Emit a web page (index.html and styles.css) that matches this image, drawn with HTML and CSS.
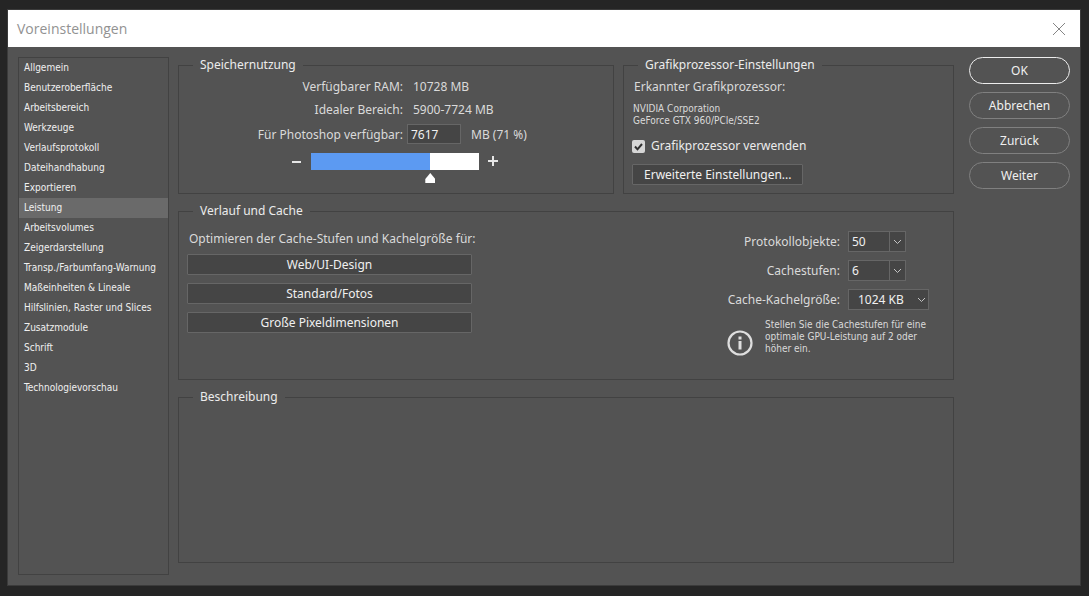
FILE: index.html
```html
<!DOCTYPE html>
<html lang="de">
<head>
<meta charset="utf-8">
<title>Voreinstellungen</title>
<link rel="stylesheet" href="styles.css">
</head>
<body>
<main class="dialog">
  <header class="titlebar">
    <h1 class="title">Voreinstellungen</h1>
    <button class="close" type="button" aria-label="Schließen">
      <svg width="14" height="14" viewBox="0 0 14 14"><path d="M1 1l12 12M13 1L1 13" fill="none" stroke="#858585" stroke-width="1"/></svg>
    </button>
  </header>
  <div class="body">
    <nav class="sidebar" aria-label="Kategorien">
      <a href="#">Allgemein</a>
      <a href="#">Benutzeroberfläche</a>
      <a href="#">Arbeitsbereich</a>
      <a href="#">Werkzeuge</a>
      <a href="#">Verlaufsprotokoll</a>
      <a href="#">Dateihandhabung</a>
      <a href="#">Exportieren</a>
      <a href="#" class="active" aria-current="page">Leistung</a>
      <a href="#">Arbeitsvolumes</a>
      <a href="#">Zeigerdarstellung</a>
      <a href="#">Transp./Farbumfang-Warnung</a>
      <a href="#">Maßeinheiten &amp; Lineale</a>
      <a href="#">Hilfslinien, Raster und Slices</a>
      <a href="#">Zusatzmodule</a>
      <a href="#">Schrift</a>
      <a href="#">3D</a>
      <a href="#">Technologievorschau</a>
    </nav>

    <div class="panels">
      <div class="top-row">
        <fieldset class="group memory">
          <legend>Speichernutzung</legend>
          <div class="memory-grid">
            <span class="label">Verfügbarer RAM:</span><span class="value">10728 MB</span>
            <span class="label">Idealer Bereich:</span><span class="value">5900-7724 MB</span>
            <label class="label" for="ram">Für Photoshop verfügbar:</label>
            <span class="ram-entry"><input class="field ram-field" id="ram" type="text" value="7617"><span>MB (71 %)</span></span>
          </div>
          <div class="slider-row">
            <button class="step" type="button" aria-label="Weniger"><svg width="11" height="11" viewBox="0 0 11 11"><path d="M1 6h9" stroke="#e6e6e6" stroke-width="2"/></svg></button>
            <div class="slider">
              <div class="slider-bar"><div class="slider-fill" style="width: 71%"></div></div>
              <input class="slider-input" type="range" min="0" max="10728" value="7617" aria-label="Für Photoshop verfügbarer Speicher">
            </div>
            <button class="step" type="button" aria-label="Mehr"><svg width="11" height="11" viewBox="0 0 11 11"><path d="M0 5h10M5 0v10" stroke="#e6e6e6" stroke-width="2"/></svg></button>
          </div>
        </fieldset>

        <fieldset class="group gpu">
          <legend>Grafikprozessor-Einstellungen</legend>
          <p class="gpu-title">Erkannter Grafikprozessor:</p>
          <p class="small gpu-name">NVIDIA Corporation<br>GeForce GTX 960/PCIe/SSE2</p>
          <label class="check"><input type="checkbox" checked>Grafikprozessor verwenden</label>
          <button class="push advanced" type="button">Erweiterte Einstellungen...</button>
        </fieldset>
      </div>

      <fieldset class="group cache">
        <legend>Verlauf und Cache</legend>
        <div class="cache-row">
          <div class="presets">
            <p>Optimieren der Cache-Stufen und Kachelgröße für:</p>
            <button class="push" type="button">Web/UI-Design</button>
            <button class="push" type="button">Standard/Fotos</button>
            <button class="push" type="button">Große Pixeldimensionen</button>
          </div>
          <div class="cache-settings">
            <label class="label" for="history">Protokollobjekte:</label>
            <span class="combo">
              <input class="field" id="history" type="text" value="50">
              <button type="button" aria-label="Protokollobjekte auswählen"><svg width="9" height="6" viewBox="0 0 9 6"><path d="M1 1l3.500 3.500L8 1" fill="none" stroke="#c4c4c4"/></svg></button>
            </span>
            <label class="label" for="levels">Cachestufen:</label>
            <span class="combo">
              <input class="field" id="levels" type="text" value="6">
              <button type="button" aria-label="Cachestufen auswählen"><svg width="9" height="6" viewBox="0 0 9 6"><path d="M1 1l3.500 3.500L8 1" fill="none" stroke="#c4c4c4"/></svg></button>
            </span>
            <label class="label" for="tile">Cache-Kachelgröße:</label>
            <span class="dropdown">
              <select id="tile"><option>1024 KB</option></select>
              <svg width="9" height="6" viewBox="0 0 9 6"><path d="M1 1l3.500 3.500L8 1" fill="none" stroke="#c4c4c4"/></svg>
            </span>
            <div class="hint">
              <svg width="26" height="26" viewBox="0 0 26 26"><circle cx="13" cy="13" r="11.500" fill="none" stroke="#dedede" stroke-width="2.200"/><path d="M11.500 11h3v8.500h-3zM11.500 6.500h3v3h-3z" fill="#dedede"/></svg>
              <p class="small">Stellen Sie die Cachestufen für eine optimale GPU-Leistung auf 2 oder höher ein.</p>
            </div>
          </div>
        </div>
      </fieldset>

      <fieldset class="group description">
        <legend>Beschreibung</legend>
      </fieldset>
    </div>

    <div class="actions">
      <button class="pill primary" type="button">OK</button>
      <button class="pill" type="button">Abbrechen</button>
      <button class="pill" type="button">Zurück</button>
      <button class="pill" type="button">Weiter</button>
    </div>
  </div>
</main>
</body>
</html>
```
FILE: styles.css
```css
* { box-sizing: border-box; }

body {
  margin: 0;
  min-height: 100vh;
  padding: 10px 9px 11px 8px;
  display: flex;
  background: #252525;
  color: #dadada;
  font: 12px/14px "Noto Sans", "Open Sans", sans-serif;
}

p, h1 { margin: 0; }

button, input, select {
  margin: 0;
  font: inherit;
  color: #f0f0f0;
}

svg { display: block; }

.dialog {
  flex: 1;
  display: flex;
  flex-direction: column;
  background: #535353;
  outline: 1px solid #3b3b3b;
}

.titlebar {
  height: 37px;
  padding: 0 14px 0 9px;
  display: flex;
  align-items: center;
  justify-content: space-between;
  background: #fff;
}

.title {
  font: 400 14px/20px "Open Sans", sans-serif;
  color: #929292;
}

.close {
  padding: 0;
  border: 0;
  background: none;
}

.body {
  flex: 1;
  display: flex;
  padding: 10px;
}

.sidebar {
  width: 151px;
  margin-right: 9px;
  border: 1px solid #424242;
}

.sidebar a {
  display: block;
  padding-left: 5px;
  font-family: "DejaVu Sans Condensed", sans-serif;
  font-size: 10px;
  line-height: 20px;
  white-space: nowrap;
  color: #f0f0f0;
  text-decoration: none;
}

.sidebar .active { background: #6a6a6a; }

.panels {
  flex: 1;
  display: flex;
  flex-direction: column;
  gap: 9px;
  padding-bottom: 12px;
}

.top-row {
  display: grid;
  grid-template-columns: 436fr 331fr;
  gap: 9px;
}

.group {
  min-width: 0;
  margin: 0;
  padding: 0;
  border: 1px solid #424242;
}

.group legend {
  margin-left: 14px;
  padding: 0 7px;
  line-height: 16px;
  color: #ececec;
}

.memory { min-height: 137px; }

.gpu { padding: 0 8px; }

.gpu legend { margin-left: 6px; }

.memory-grid {
  display: grid;
  grid-template-columns: 224px 1fr;
  row-gap: 6px;
  align-items: center;
  padding-top: 5px;
  line-height: 17px;
}

.label { text-align: right; }

.value { padding-left: 10px; }

.field {
  min-width: 0;
  padding: 0 3px;
  border: 1px solid #666;
  background: #454545;
}

.ram-entry {
  display: flex;
  align-items: center;
  gap: 10px;
  padding-left: 4px;
}

.ram-field {
  width: 54px;
  height: 20px;
}

.slider-row {
  display: flex;
  align-items: flex-start;
  gap: 9px;
  padding: 9px 0 0 112px;
}

.step {
  height: 17px;
  padding: 0;
  border: 0;
  background: none;
}

.slider {
  width: 168px;
  display: grid;
}

.slider-bar, .slider-input { grid-area: 1 / 1; }

.slider-bar {
  height: 17px;
  background: #fff;
}

.slider-fill {
  height: 100%;
  background: #5c9af2;
}

.slider-input {
  height: 30px;
  width: 178px;
  margin: 0 -5px;
  appearance: none;
  background: none;
}

.slider-input::-webkit-slider-runnable-track { height: 30px; }

.slider-input::-webkit-slider-thumb {
  appearance: none;
  width: 10px;
  height: 10px;
  margin-top: 20px;
  background: #fff;
  clip-path: polygon(50% 0, 100% 60%, 100% 100%, 0 100%, 0 60%);
}

.gpu-title { padding: 7px 0 0 2px; }

.small {
  font-family: "DejaVu Sans Condensed", sans-serif;
  font-size: 10px;
  line-height: 12px;
}

.gpu-name { padding: 9px 0 0 1px; }

.check {
  display: flex;
  align-items: center;
  gap: 6px;
  margin-top: 12px;
  color: #ececec;
}

.check input {
  appearance: none;
  width: 13px;
  height: 13px;
  border-radius: 2px;
  background: #d6d6d6;
}

.check input:checked {
  background: #d6d6d6 url("data:image/svg+xml,%3Csvg xmlns='http://www.w3.org/2000/svg' viewBox='0 0 13 13'%3E%3Cpath d='M3 6.500l2.500 2.800L10 4' fill='none' stroke='%23303030' stroke-width='2'/%3E%3C/svg%3E");
}

.push {
  height: 21px;
  padding: 0 11px;
  border: 1px solid #666;
  border-radius: 1px;
  background: #454545;
}

.advanced { margin-top: 11px; }

.cache { min-height: 177px; }

.cache-row {
  display: flex;
  justify-content: space-between;
  padding: 12px 24px 0 8px;
}

.presets {
  width: 285px;
  display: flex;
  flex-direction: column;
  gap: 8px;
}

.presets p {
  padding: 1px 0 0 2px;
  white-space: nowrap;
}

.cache-settings {
  display: grid;
  grid-template-columns: 113px 81px;
  column-gap: 8px;
  row-gap: 8px;
  align-items: center;
}

.combo {
  display: flex;
  width: 58px;
  height: 21px;
}

.combo .field { width: 42px; }

.combo button {
  width: 17px;
  margin-left: -1px;
  padding: 0;
  display: grid;
  place-items: center;
  border: 1px solid #666;
  background: #454545;
}

.dropdown {
  display: grid;
  align-items: center;
}

.dropdown select, .dropdown svg { grid-area: 1 / 1; }

.dropdown select {
  appearance: none;
  width: 100%;
  height: 21px;
  padding: 0 9px;
  border: 1px solid #666;
  border-radius: 0;
  background: #454545;
}

.dropdown svg {
  justify-self: end;
  margin-right: 3px;
  pointer-events: none;
}

.hint {
  grid-column: 1 / -1;
  display: grid;
  grid-template-columns: 26px 1fr;
  gap: 12px;
}

.hint svg { margin-top: 12px; }

.hint p { padding-top: 1px; }

.description { flex: 1; }

.actions {
  width: 101px;
  margin-left: 15px;
  display: flex;
  flex-direction: column;
  gap: 8px;
}

.pill {
  height: 27px;
  padding: 0;
  border: 1px solid #808080;
  border-radius: 14px;
  background: none;
}

.primary { border-color: #ededed; }
```
